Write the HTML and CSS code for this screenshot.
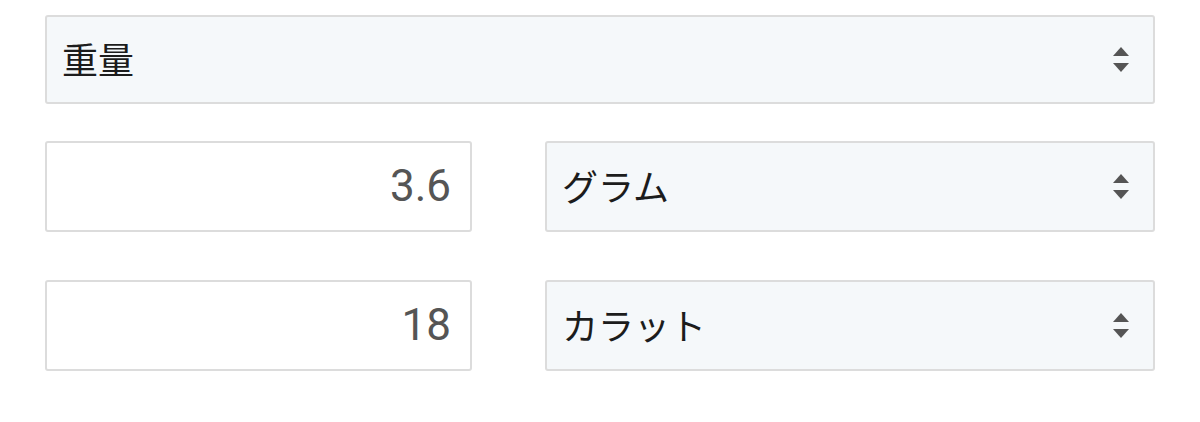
FILE: index.html
```html
<!DOCTYPE html>
<html lang="ja">
<head>
<meta charset="utf-8">
<link rel="stylesheet" href="styles.css">
</head>
<body>
<div class="form">
  <div class="select top">
    <span class="label">重量</span>
    <svg class="arrows" viewBox="0 0 16 26" width="16" height="26"><path d="M8 0 L16 9 L0 9 Z" fill="#555"/><path d="M0 16 L16 16 L8 25 Z" fill="#555"/></svg>
  </div>
  <div class="row">
    <div class="input"><span class="num">3.6</span></div>
    <div class="select">
      <span class="label">グラム</span>
      <svg class="arrows" viewBox="0 0 16 26" width="16" height="26"><path d="M8 0 L16 9 L0 9 Z" fill="#555"/><path d="M0 16 L16 16 L8 25 Z" fill="#555"/></svg>
    </div>
  </div>
  <div class="row">
    <div class="input"><span class="num">18</span></div>
    <div class="select">
      <span class="label">カラット</span>
      <svg class="arrows" viewBox="0 0 16 26" width="16" height="26"><path d="M8 0 L16 9 L0 9 Z" fill="#555"/><path d="M0 16 L16 16 L8 25 Z" fill="#555"/></svg>
    </div>
  </div>
</div>
</body>
</html>
```
FILE: styles.css
```css
html, body {
  margin: 0;
  padding: 0;
  background: #ffffff;
}
.form {
  width: 1110px;
  padding: 15px 45px;
  display: flex;
  flex-direction: column;
}
.select, .input {
  box-sizing: border-box;
  border: 2px solid #dcdcdc;
  border-radius: 3px;
  display: flex;
  align-items: center;
}
.select {
  background: #f5f8fa;
  justify-content: space-between;
  padding: 0 24px 0 15px;
}
.select.top {
  height: 89px;
  margin-bottom: 37px;
}
.label {
  font-family: "Noto Sans CJK JP", "Noto Sans", sans-serif;
  font-size: 36px;
  color: #1c1c1c;
  line-height: 1;
  margin-top: -3px;
}
.arrows {
  display: block;
}
.row {
  display: grid;
  grid-template-columns: 427px 1fr;
  column-gap: 73px;
  height: 91px;
  margin-bottom: 48px;
}
.row:last-child {
  margin-bottom: 0;
}
.input {
  background: #ffffff;
  justify-content: flex-end;
  padding: 0 19px 0 16px;
}
.num {
  font-family: Roboto, "Liberation Sans", sans-serif;
  font-size: 44px;
  color: #555555;
  line-height: 1;
  margin-top: -2px;
}
```
